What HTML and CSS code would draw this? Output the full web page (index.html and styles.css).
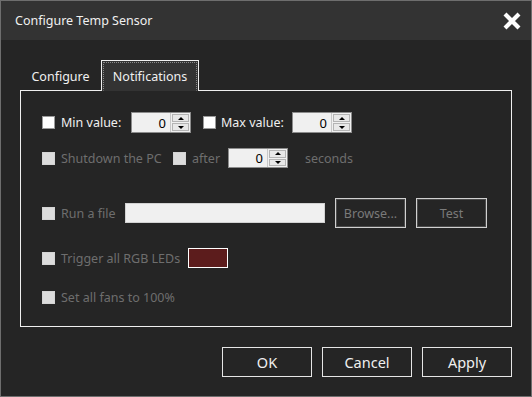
FILE: index.html
```html
<!DOCTYPE html>
<html>
    <head>
        <link rel="stylesheet" href="styles.css">
    </head>
    <body>
        <div class="window">
            <div class="titlebar">
                <span class="title">Configure Temp Sensor</span>
                <svg class="close" width="20" height="20" viewBox="0 0 20 20">
                    <path d="M3 3 L17 17 M17 3 L3 17" stroke="#ffffff" stroke-width="4.2" fill="none"/>
                </svg>
            </div>
            <div class="content">
                <div class="tabs">
                    <div class="tab">Configure</div>
                    <div class="tab active"><span class="focus">Notifications</span></div>
                </div>
                <div class="panel">
                    <div class="row row1">
                        <input type="checkbox" class="check">
                        <label class="lbl lblMin">Min value:</label>
                        <div class="spin">
                            <input class="spinText" type="text" value="0">
                            <div class="arrows"><span class="up"></span><span class="down"></span></div>
                        </div>
                        <input type="checkbox" class="check checkMax">
                        <label class="lbl lblMax">Max value:</label>
                        <div class="spin">
                            <input class="spinText" type="text" value="0">
                            <div class="arrows"><span class="up"></span><span class="down"></span></div>
                        </div>
                    </div>
                    <div class="row row2">
                        <input type="checkbox" class="check" disabled>
                        <label class="lbl off lblShutdown">Shutdown the PC</label>
                        <input type="checkbox" class="check" disabled>
                        <label class="lbl off lblAfter">after</label>
                        <div class="spin spinSmall">
                            <input class="spinText" type="text" value="0">
                            <div class="arrows"><span class="up"></span><span class="down"></span></div>
                        </div>
                        <label class="lbl off lblSeconds">seconds</label>
                    </div>
                    <div class="row row3">
                        <input type="checkbox" class="check" disabled>
                        <label class="lbl off lblRun">Run a file</label>
                        <input class="fileInput" type="text" disabled>
                        <button class="smallBtn browse" disabled>Browse...</button>
                        <button class="smallBtn" disabled>Test</button>
                    </div>
                    <div class="row row4">
                        <input type="checkbox" class="check" disabled>
                        <label class="lbl off lblRgb">Trigger all RGB LEDs</label>
                        <span class="swatch"></span>
                    </div>
                    <div class="row row5">
                        <input type="checkbox" class="check" disabled>
                        <label class="lbl off">Set all fans to 100%</label>
                    </div>
                </div>
                <div class="footer">
                    <button class="btn">OK</button>
                    <button class="btn">Cancel</button>
                    <button class="btn">Apply</button>
                </div>
            </div>
        </div>
    </body>
</html>
```

FILE: styles.css
```css
body{
    margin: 0;
    background-color: #252525;
    font-family: "Noto Sans", "Open Sans", sans-serif;
}

.window{
    width: 532px;
    height: 397px;
    box-sizing: border-box;
    border: 1px solid #6e6e6e;
    background-color: #252525;
}

.titlebar{
    height: 39px;
    background-color: #333333;
    display: flex;
    align-items: center;
    justify-content: space-between;
    padding: 0 9px 0 14px;
}

.title{
    color: #f0f0f0;
    font-size: 12.5px;
}

.close{
    display: block;
}

.content{
    padding: 20px 19px 0 19px;
}

.tabs{
    display: flex;
    height: 31px;
    margin-bottom: -1px;
    position: relative;
}

.tab{
    width: 81px;
    box-sizing: border-box;
    display: flex;
    align-items: center;
    justify-content: center;
    color: #f0f0f0;
    font-size: 12.5px;
    padding-top: 2px;
}

.tab.active{
    width: 98px;
    border: 1px solid #f0f0f0;
    border-bottom: none;
    background-color: #333333;
    padding: 1px 1px 0 1px;
    align-items: stretch;
}

.focus{
    flex: 1;
    display: flex;
    align-items: center;
    justify-content: center;
    border: 1px dotted #8a8a8a;
    border-bottom-color: #333333;
}

.panel{
    height: 237px;
    box-sizing: border-box;
    border: 1px solid #f0f0f0;
    padding: 21px 0 0 21px;
}

.row{
    display: flex;
    align-items: center;
}

.row1{
    height: 21px;
}

.row2{
    height: 20px;
    margin-top: 15px;
}

.row3{
    height: 30px;
    margin-top: 30px;
}

.row4{
    height: 20px;
    margin-top: 20px;
}

.row5{
    height: 20px;
    margin-top: 19px;
}

.check{
    appearance: none;
    margin: 0;
    width: 13px;
    height: 13px;
    box-sizing: border-box;
    background-color: #ffffff;
    border: 1px solid #9a9a9a;
}

.check:disabled{
    background-color: #dcdcdc;
    border-color: #d4d4d4;
}

.checkMax{
    margin-left: 12px;
}

.lbl{
    color: #f0f0f0;
    font-size: 12.5px;
    margin-left: 6px;
    white-space: nowrap;
}

.off{
    color: #6e6e6e;
}

.lblMin{
    width: 70px;
}

.lblMax{
    margin-left: 5px;
    width: 71px;
}

.lblShutdown{
    width: 112px;
}

.lblAfter{
    width: 36px;
}

.lblSeconds{
    margin-left: 17px;
}

.lblRun{
    width: 64px;
}

.lblRgb{
    width: 127px;
}

.spin{
    display: flex;
    width: 60px;
    height: 21px;
    box-sizing: border-box;
    border: 1px solid #8c8c8c;
    background-color: #f0f0f0;
}

.spinSmall{
    height: 20px;
}

.spinText{
    width: 39px;
    box-sizing: border-box;
    border: none;
    border-right: 1px solid #c8c8c8;
    background-color: #f0f0f0;
    text-align: right;
    padding: 0 4px 0 0;
    font-family: "Noto Sans", sans-serif;
    font-size: 13px;
    color: #000000;
}

.arrows{
    flex: 1;
    display: flex;
    flex-direction: column;
    padding: 1px 1px 1px 1px;
    gap: 1px;
}

.arrows span{
    flex: 1;
    border: 1px solid #b4b4b4;
    background-color: #e8e8e8;
    display: flex;
    align-items: center;
    justify-content: center;
}

.up::after{
    content: "";
    border-left: 3px solid transparent;
    border-right: 3px solid transparent;
    border-bottom: 3px solid #000000;
}

.down::after{
    content: "";
    border-left: 3px solid transparent;
    border-right: 3px solid transparent;
    border-top: 3px solid #000000;
}

.fileInput{
    width: 200px;
    height: 20px;
    box-sizing: border-box;
    border: 1px solid #d2d2d2;
    background-color: #f0f0f0;
    margin: 0 10px 0 0;
}

.smallBtn{
    width: 71px;
    height: 30px;
    box-sizing: border-box;
    border: 1px solid #d0d0d0;
    box-shadow: inset 0 0 0 1px #4a4a4a;
    background-color: #252525;
    color: #7a7a7a;
    font-family: "Noto Sans", sans-serif;
    font-size: 12.5px;
    padding: 0;
}

.browse{
    margin-right: 10px;
}

.swatch{
    width: 40px;
    height: 20px;
    box-sizing: border-box;
    border: 1px solid #ffffff;
    background-color: #5c1c1c;
}

.footer{
    display: flex;
    justify-content: flex-end;
    gap: 10px;
    margin-top: 20px;
}

.btn{
    width: 90px;
    height: 30px;
    box-sizing: border-box;
    border: 1px solid #e6e6e6;
    background-color: #252525;
    color: #f0f0f0;
    font-family: "Noto Sans", sans-serif;
    font-size: 14.5px;
    padding: 0;
}
```
